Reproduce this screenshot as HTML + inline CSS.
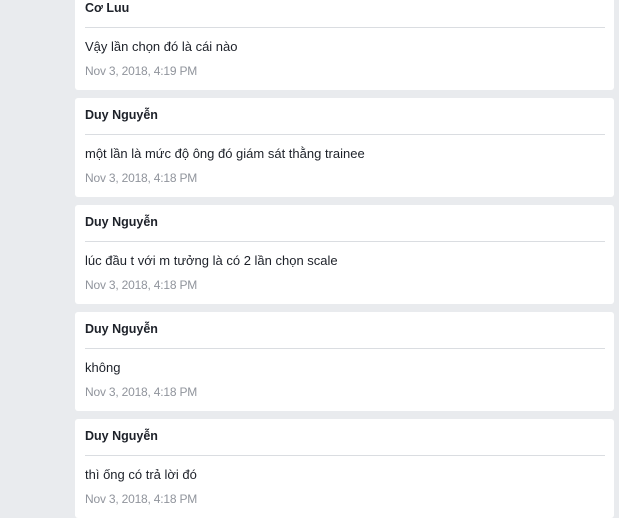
<!DOCTYPE html>
<html><head><style>
body{margin:0;width:619px;height:518px;background:#e9ebee;overflow:hidden;position:relative;font-family:"Liberation Sans",Arial,sans-serif;}
.c{position:absolute;left:75px;width:539px;height:99px;background:#fff;border-radius:3px;}
.n{position:absolute;left:10px;top:10px;font-size:12.5px;font-weight:bold;color:#1d2129;}
.d{position:absolute;left:10px;right:9px;top:36px;height:1px;background:#dadde1;}
.m{position:absolute;left:10px;top:48px;font-size:13px;color:#1d2129;}
.t{position:absolute;left:10px;top:73px;font-size:12px;letter-spacing:-0.2px;color:#90949c;}
</style></head><body>
<div class="c" style="top:-9px"><div class="n">Cơ Luu</div><div class="d"></div><div class="m">Vậy lần chọn đó là cái nào</div><div class="t">Nov 3, 2018, 4:19 PM</div></div>
<div class="c" style="top:98px"><div class="n">Duy Nguyễn</div><div class="d"></div><div class="m">một lần là mức độ ông đó giám sát thằng trainee</div><div class="t">Nov 3, 2018, 4:18 PM</div></div>
<div class="c" style="top:205px"><div class="n">Duy Nguyễn</div><div class="d"></div><div class="m">lúc đầu t với m tưởng là có 2 lần chọn scale</div><div class="t">Nov 3, 2018, 4:18 PM</div></div>
<div class="c" style="top:312px"><div class="n">Duy Nguyễn</div><div class="d"></div><div class="m">không</div><div class="t">Nov 3, 2018, 4:18 PM</div></div>
<div class="c" style="top:419px"><div class="n">Duy Nguyễn</div><div class="d"></div><div class="m">thì ống có trả lời đó</div><div class="t">Nov 3, 2018, 4:18 PM</div></div>
</body></html>
